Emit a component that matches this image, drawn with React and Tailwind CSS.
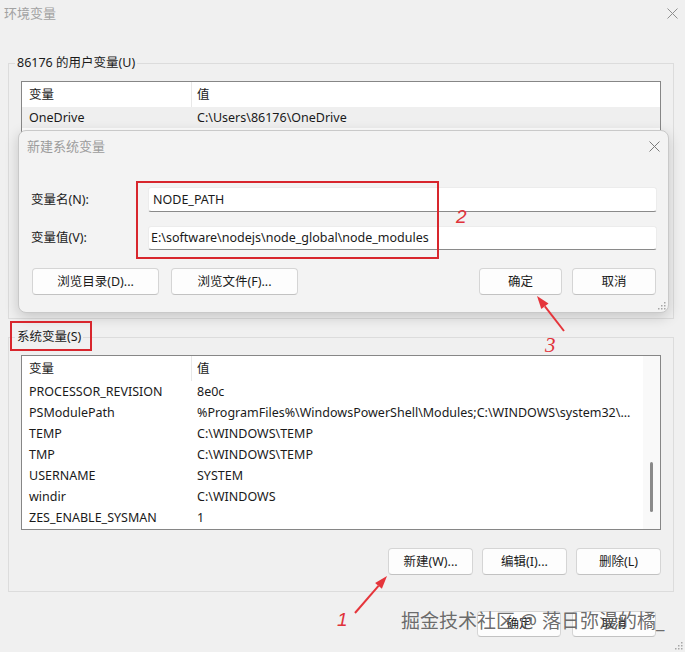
import React from "react";

const FONT = "font-['Noto_Sans','Noto_Sans_CJK_SC',sans-serif]";

function CloseIcon({ size = 11, color = "#8a8a8a" }) {
  return (
    <svg width={size} height={size} viewBox="0 0 11 11" fill="none">
      <path d="M0.5 0.5 L10.5 10.5 M10.5 0.5 L0.5 10.5" stroke={color} strokeWidth="1" />
    </svg>
  );
}

function Grip() {
  const dots = [
    [7, 1],
    [4, 4],
    [7, 4],
    [1, 7],
    [4, 7],
    [7, 7],
  ];
  return (
    <svg width="9" height="9" viewBox="0 0 9 9">
      {dots.map(([x, y], i) => (
        <rect key={i} x={x} y={y} width="1.5" height="1.5" fill="#a6a6a6" />
      ))}
    </svg>
  );
}

function Btn({ children, className }) {
  return (
    <div
      className={`flex items-center justify-center rounded-[4px] border border-[#d5d5d5] border-b-[#c2c2c2] bg-[#fdfdfd] text-[12.5px] leading-[16px] text-[#1b1b1b] ${className}`}
    >
      {children}
    </div>
  );
}

function Row({ name, value, className = "" }) {
  return (
    <div className={`flex h-[21px] items-center whitespace-nowrap ${className}`}>
      <div className="w-[170px] shrink-0 pl-[7px]">{name}</div>
      <div className="pl-[5px]">{value}</div>
    </div>
  );
}

function Header() {
  return (
    <div className="flex h-[25px] items-stretch">
      <div className="flex w-[169px] shrink-0 items-center pl-[7px]">变量</div>
      <div className="w-px bg-[#e8e8e8]" />
      <div className="flex items-center pl-[5px]">值</div>
    </div>
  );
}

const systemVars = [
  ["PROCESSOR_REVISION", "8e0c"],
  ["PSModulePath", "%ProgramFiles%\\WindowsPowerShell\\Modules;C:\\WINDOWS\\system32\\..."],
  ["TEMP", "C:\\WINDOWS\\TEMP"],
  ["TMP", "C:\\WINDOWS\\TEMP"],
  ["USERNAME", "SYSTEM"],
  ["windir", "C:\\WINDOWS"],
  ["ZES_ENABLE_SYSMAN", "1"],
];

export default function App() {
  return (
    <div
      className={`relative h-[652px] w-[685px] overflow-hidden bg-[#f0f0f0] text-[12.5px] leading-[16px] text-[#1a1a1a] ${FONT}`}
    >
      {/* window title */}
      <div className="flex h-[26px] items-center justify-between pl-[4px] pr-[7px]">
        <span className="text-[13px] text-[#a2a2a2]">环境变量</span>
        <CloseIcon size={11} color="#8f8f8f" />
      </div>

      {/* user variables */}
      <fieldset className="ml-[8px] mt-[29px] h-[264px] w-[666px] border border-[#dcdcdc] px-[12px] pt-[10px]">
        <legend className="ml-[-6px] px-[2px] leading-[16px]">86176 的用户变量(U)</legend>
        <div className="h-[170px] border border-[#868686] bg-white">
          <Header />
          <Row name="OneDrive" value="C:\Users\86176\OneDrive" className="bg-[#efefef]" />
        </div>
      </fieldset>

      {/* system variables */}
      <fieldset className="ml-[8px] mt-[10px] w-[666px] border border-[#dcdcdc] px-[12px] pb-[16px] pt-[10px]">
        <legend className="ml-[-6px] px-[2px] leading-[16px]">系统变量(S)</legend>
        <div className="flex h-[175px] border border-[#868686] bg-white">
          <div className="min-w-0 flex-1 overflow-hidden">
            <Header />
            {systemVars.map(([n, v]) => (
              <Row key={n} name={n} value={v} />
            ))}
          </div>
          <div className="flex w-[17px] shrink-0 flex-col items-center bg-[#f9f9f9] pt-[106px]">
            <div className="h-[50px] w-[3px] rounded-full bg-[#8a8a8a]" />
          </div>
        </div>
        <div className="mt-[18px] flex justify-end gap-[9px]">
          <Btn className="h-[27px] w-[85px]">新建(W)...</Btn>
          <Btn className="h-[27px] w-[85px]">编辑(I)...</Btn>
          <Btn className="h-[27px] w-[85px]">删除(L)</Btn>
        </div>
      </fieldset>

      {/* window buttons */}
      <div className="mt-[19px] flex justify-end gap-[11px] pr-[29px]">
        <Btn className="h-[26px] w-[84px]">确定</Btn>
        <Btn className="h-[26px] w-[84px]">取消</Btn>
      </div>

      <div className="absolute bottom-[2px] right-[2px]">
        <Grip />
      </div>

      {/* new system variable dialog */}
      <div className="absolute left-[18px] top-[130px] h-[183px] w-[651px] rounded-[8px] border border-[#c9c9c9] bg-[#f3f3f3] shadow-[0_4px_14px_rgba(0,0,0,0.18)]">
        <div className="flex h-[30px] items-center justify-between px-[8px]">
          <span className="text-[13px] text-[#9c9c9c]">新建系统变量</span>
          <CloseIcon size={11} color="#7a7a7a" />
        </div>
        <div className="pr-[11px]">
          <div className="mt-[26px] flex items-center">
            <div className="w-[129px] shrink-0 pl-[12px]">变量名(N):</div>
            <div className="flex h-[25px] flex-1 items-center rounded-[3px] border border-[#ececec] border-b-[#8a8a8a] bg-white pl-[4px]">
              NODE_PATH
            </div>
          </div>
          <div className="mt-[14px] flex items-center">
            <div className="w-[129px] shrink-0 pl-[12px]">变量值(V):</div>
            <div className="flex h-[24px] flex-1 items-center rounded-[3px] border border-[#ececec] border-b-[#8a8a8a] bg-white pl-[2px]">
              E:\software\nodejs\node_global\node_modules
            </div>
          </div>
        </div>
        <div className="mt-[18px] flex items-center pl-[13px] pr-[12px]">
          <Btn className="h-[27px] w-[127px]">浏览目录(D)...</Btn>
          <Btn className="ml-[12px] h-[27px] w-[127px]">浏览文件(F)...</Btn>
          <div className="flex-1" />
          <Btn className="h-[27px] w-[83px]">确定</Btn>
          <Btn className="ml-[10px] h-[27px] w-[84px]">取消</Btn>
        </div>
        <div className="absolute bottom-[2px] right-[2px]">
          <Grip />
        </div>
      </div>

      {/* annotation boxes */}
      <div className="absolute left-[136px] top-[181px] h-[78px] w-[303px] border-2 border-[#d8262d]" />
      <div className="absolute left-[10px] top-[321px] h-[30px] w-[82px] border-2 border-[#d8262d]" />

      {/* annotation arrows */}
      <svg className="pointer-events-none absolute left-0 top-0" width="685" height="652">
        <line x1="564" y1="331" x2="544.9" y2="306.3" stroke="#e5353b" strokeWidth="2" />
        <polygon points="537,296 548.5,303.6 541.3,309.1" fill="#e5353b" />
        <line x1="355" y1="613" x2="378.5" y2="585.8" stroke="#e5353b" strokeWidth="2" />
        <polygon points="387,576 381.9,588.8 375.1,582.9" fill="#e5353b" />
      </svg>

      {/* annotation numbers */}
      <span className="absolute left-[456px] top-[205px] font-['Liberation_Sans',sans-serif] text-[19px] italic leading-[24px] text-[#e0323a]">2</span>
      <span className="absolute left-[545px] top-[333px] font-['Liberation_Serif',serif] text-[21px] italic leading-[24px] text-[#e0323a]">3</span>
      <span className="absolute left-[337px] top-[608px] font-['Liberation_Sans',sans-serif] text-[19px] italic leading-[24px] text-[#e0323a]">1</span>

      {/* watermark */}
      <span className="absolute left-[401px] top-[609px] whitespace-nowrap text-[19px] leading-[24px] text-[#5a5a5a]/90">
        掘金技术社区 @ 落日弥漫的橘_
      </span>
    </div>
  );
}
